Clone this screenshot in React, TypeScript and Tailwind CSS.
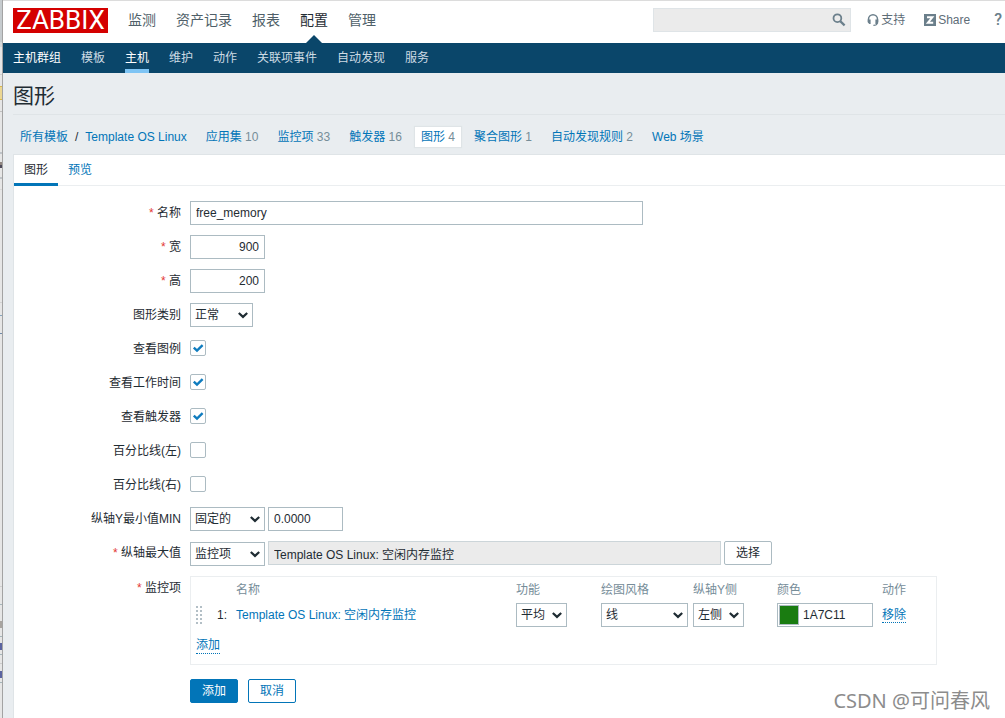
import React from "react";

const mainMenu = ["监测", "资产记录", "报表", "配置", "管理"];
const subMenu = ["主机群组", "模板", "主机", "维护", "动作", "关联项事件", "自动发现", "服务"];
const templateLinks: { label: string; count?: number; active?: boolean }[] = [
  { label: "应用集", count: 10 },
  { label: "监控项", count: 33 },
  { label: "触发器", count: 16 },
  { label: "图形", count: 4, active: true },
  { label: "聚合图形", count: 1 },
  { label: "自动发现规则", count: 2 },
  { label: "Web 场景" },
];

const fieldBox = "block h-6 border border-[#acbbc2] bg-white text-xs text-[#1f2c33] outline-none focus:border-[#0275b8]";

function Chevron() {
  return (
    <svg className="pointer-events-none absolute right-[5px] top-[7px] h-[10px] w-[10px]" viewBox="0 0 10 10" aria-hidden="true">
      <path d="M0.8 3 L5 6.9 L9.2 3" fill="none" stroke="#1f2c33" strokeWidth="2.2" />
    </svg>
  );
}

function Select({ id, value, width, label }: { id: string; value: string; width: string; label?: string }) {
  return (
    <span className={`relative block ${width}`}>
      <select id={id} aria-label={label} defaultValue={value} className={`${fieldBox} w-full appearance-none pr-4 pl-1`}>
        <option>{value}</option>
      </select>
      <Chevron />
    </span>
  );
}

function Row({ id, label, required, children }: { id: string; label: string; required?: boolean; children: React.ReactNode }) {
  return (
    <div className="grid grid-cols-[167px_minmax(0,1fr)] gap-x-[9px]">
      <label htmlFor={id} className="text-right leading-6">
        {required && <span className="text-[#e33734]">* </span>}
        {label}
      </label>
      <div>{children}</div>
    </div>
  );
}

function CheckRow({ id, label, checked }: { id: string; label: string; checked?: boolean }) {
  return (
    <Row id={id} label={label}>
      <div className="h-6 pt-[3px]">
        <span className="relative block h-4 w-4">
          <input
            id={id}
            type="checkbox"
            defaultChecked={checked}
            className="peer block h-4 w-4 appearance-none rounded-xs border border-[#acbbc2] bg-white"
          />
          <svg className="pointer-events-none absolute inset-0 hidden h-4 w-4 peer-checked:block" viewBox="0 0 16 16" aria-hidden="true">
            <path d="M3.8 7.6 L7 10.6 L12.6 5.2" fill="none" stroke="#0f7cbf" strokeWidth="2.4" />
          </svg>
        </span>
      </div>
    </Row>
  );
}

function WindowEdge() {
  const marks: [number, number, string][] = [
    [0, 42, "#c6cbce"],
    [42, 5, "#d6d9da"],
    [74, 1, "#d0d0d0"],
    [86, 14, "#d9b84f"],
    [87, 12, "#ecd793"],
    [111, 1, "#c0c0c0"],
    [152, 2, "#bfc4c8"],
    [162, 3, "#8f8580"],
    [165, 3, "#4e4a5a"],
    [177, 2, "#bfc4c8"],
    [189, 1, "#d8d8d8"],
    [302, 1, "#d2d2d2"],
    [315, 1, "#86a5bd"],
    [333, 1, "#6f8aa8"],
    [586, 1, "#d0d0d0"],
    [604, 1, "#a5b5ba"],
    [621, 7, "#a8a4a0"],
    [636, 1, "#a5b5ba"],
    [643, 7, "#5a63a0"],
    [654, 1, "#a5b5ba"],
    [663, 1, "#cccccc"],
    [671, 7, "#5a63a0"],
    [682, 1, "#a5b5ba"],
  ];
  return (
    <aside className="w-[3px] shrink-0 border-r border-[#a3a3a3] bg-[#e6e6e6]" aria-hidden="true">
      <svg width="2" height="718" className="block" shapeRendering="crispEdges">
        {marks.map(([y, h, c]) => (
          <rect key={y} x="0" y={y} width="2" height={h} fill={c} />
        ))}
      </svg>
    </aside>
  );
}

function Header() {
  return (
    <header>
      <div className="flex h-[43px] items-start border-t border-[#dcdcdc] bg-white pl-[10px] pr-[3px] pt-[7px]">
        <a href="#" className="flex h-[25px] w-[95px] shrink-0 items-center justify-center bg-[#d40000] font-['Roboto','Liberation_Sans',sans-serif] text-[26px] leading-[25px] text-white">
          ZABBIX
        </a>
        <nav className="ml-5 flex gap-5 text-sm leading-6 whitespace-nowrap">
          {mainMenu.map((item) => (
            <a key={item} href="#" className={item === "配置" ? "relative h-[35px] text-[#1f2c33]" : "text-[#4f5f69]"}>
              {item}
              {item === "配置" && (
                <svg className="absolute bottom-0 left-[6px] h-2 w-4" viewBox="0 0 16 8" aria-hidden="true">
                  <path d="M0 8 L8 0 L16 8 Z" fill="#0a466a" />
                </svg>
              )}
            </a>
          ))}
        </nav>
        <form className="relative ml-auto w-[198px]" role="search">
          <input aria-label="搜索" className="block h-6 w-full border border-[#dfe4e7] bg-[#ebebeb] px-1 pr-7 outline-none" />
          <button type="button" aria-label="搜索" className="absolute right-[5px] top-[5px]">
            <svg className="block h-[14px] w-[14px]" viewBox="0 0 14 14" aria-hidden="true">
              <circle cx="5.4" cy="5.2" r="3.9" fill="none" stroke="#6b7f8b" strokeWidth="1.8" />
              <path d="M8.2 8.1 L12.6 12.4" stroke="#6b7f8b" strokeWidth="2.2" />
            </svg>
          </button>
        </form>
        <div className="ml-4 flex items-center leading-6 whitespace-nowrap text-[#5e6d77]">
          <a href="#" className="flex items-center gap-[2px]">
            <svg className="h-3 w-3" viewBox="0 0 12 12" aria-hidden="true">
              <path d="M1.5 8V5.3a4.5 4.5 0 0 1 9 0V8" fill="none" stroke="#6b7f8b" strokeWidth="1.5" />
              <path d="M.8 5.6h2.8v4.4H2.3L.8 8.6zM8.4 5.6h2.8v3.6L9.8 10H8.4z" fill="#6b7f8b" />
              <path d="M10.4 9 C10 11 8.6 11.4 6.4 11.4" fill="none" stroke="#6b7f8b" strokeWidth="1.2" />
            </svg>
            支持
          </a>
          <a href="#" className="ml-[19px] flex items-center gap-[2px]">
            <svg className="h-3 w-3" viewBox="0 0 12 12" aria-hidden="true">
              <rect width="12" height="12" fill="#6b7f8b" />
              <path d="M3 3.2 H8.4 L3.8 8.8 H9.2" fill="none" stroke="#fff" strokeWidth="1.9" />
            </svg>
            Share
          </a>
          <a href="#" aria-label="帮助" className="ml-6 font-['Roboto','Liberation_Sans',sans-serif] text-base leading-6 font-medium text-[#6b7f8b]">?</a>
        </div>
      </div>
      <nav className="flex h-[30px] gap-5 bg-[#0a466a] pl-[10px] leading-[30px] whitespace-nowrap text-[#cddbe4]">
        {subMenu.map((item, i) => (
          <a
            key={item}
            href="#"
            className={item === "主机" ? "border-b-4 border-[#7ec4f4] text-white" : i === 0 ? "text-white" : ""}
          >
            {item}
          </a>
        ))}
      </nav>
    </header>
  );
}

function ItemsTable() {
  return (
    <div className="max-w-[747px] border border-[#ebeef0]">
      <table className="w-full table-fixed text-left">
        <colgroup>
          <col className="w-[21px]" />
          <col className="w-6" />
          <col />
          <col className="w-[85px]" />
          <col className="w-[92px]" />
          <col className="w-[84px]" />
          <col className="w-[105px]" />
          <col className="w-[54px]" />
        </colgroup>
        <thead className="text-[#768d99]">
          <tr className="h-[26px]">
            <th />
            <th />
            <th className="font-normal">名称</th>
            <th className="font-normal">功能</th>
            <th className="font-normal">绘图风格</th>
            <th className="font-normal">纵轴Y侧</th>
            <th className="font-normal">颜色</th>
            <th className="font-normal">动作</th>
          </tr>
        </thead>
        <tbody>
          <tr className="h-6">
            <td className="pl-[5px]">
              <svg className="block h-[18px] w-[6px]" viewBox="0 0 6 18" shapeRendering="crispEdges" aria-hidden="true">
                {[0, 4, 8, 12, 16].map((y) => (
                  <path key={y} d={`M0 ${y}h2v2h-2zM4 ${y}h2v2h-2z`} fill="#b3bfc6" />
                ))}
              </svg>
            </td>
            <td className="pl-[5px]">1:</td>
            <td>
              <a href="#" className="text-[#0275b8]">Template OS Linux: 空闲内存监控</a>
            </td>
            <td><Select id="calc" label="功能" value="平均" width="w-[51px]" /></td>
            <td><Select id="draw" label="绘图风格" value="线" width="w-[87px]" /></td>
            <td><Select id="yside" label="纵轴Y侧" value="左侧" width="w-[51px]" /></td>
            <td>
              <div className="flex h-6 w-24 border border-[#acbbc2] p-px">
                <button type="button" aria-label="选择颜色" className="h-5 w-5 shrink-0 border border-[#acbbc2] bg-[#1a7c11]" />
                <input aria-label="颜色" defaultValue="1A7C11" className="w-full min-w-0 pl-1 outline-none" />
              </div>
            </td>
            <td>
              <a href="#" className="border-b border-dotted border-[#0275b8] text-[#0275b8]">移除</a>
            </td>
          </tr>
          <tr className="h-[37px]">
            <td colSpan={8} className="pl-[5px]">
              <button type="button" className="border-b border-dotted border-[#0275b8] leading-[15px] text-[#0275b8]">添加</button>
            </td>
          </tr>
        </tbody>
      </table>
    </div>
  );
}

export default function App() {
  return (
    <div className="relative flex min-h-screen overflow-hidden bg-[#e9edf0] font-['Liberation_Sans','Noto_Sans_CJK_SC',sans-serif] text-xs text-[#1f2c33]">
      <WindowEdge />
      <div className="flex min-w-0 flex-1 flex-col">
        <Header />
        <main className="flex flex-1 flex-col pl-[10px]">
          <h1 className="h-[42px] border-b border-[#dfe4e7] text-[21px] leading-[46px]">图形</h1>
          <nav className="flex h-[39px] items-center gap-[7px] pt-1 pl-px whitespace-nowrap">
            <div className="flex px-[6px] text-[#0275b8]">
              <a href="#">所有模板</a>
              <span className="px-[7px] text-[#1f2c33]">/</span>
              <a href="#">Template OS Linux</a>
            </div>
            {templateLinks.map((l) => (
              <a
                key={l.label}
                href="#"
                className={l.active ? "bg-white px-[6px] leading-5 text-[#0275b8] shadow-[0_0_1px_1px_#dfe4e7]" : "px-[6px] leading-5 text-[#0275b8]"}
              >
                {l.label}
                {l.count !== undefined && <span className="text-[#768d99]"> {l.count}</span>}
              </a>
            ))}
          </nav>
          <div className="flex-1 border-l border-t border-[#dfe4e7] bg-white">
            <div className="flex h-[31px] border-b border-[#ebeef0]" role="tablist">
              <button type="button" role="tab" aria-selected="true" className="h-[31px] border-b-3 border-[#0275b8] px-[10px] pt-[2px]">图形</button>
              <button type="button" role="tab" aria-selected="false" className="h-[31px] border-b-3 border-transparent px-[10px] pt-[2px] text-[#0275b8]">预览</button>
            </div>
            <form className="flex flex-col gap-[10px] pt-[15px] pb-4">
              <Row id="name" label="名称" required>
                <input id="name" defaultValue="free_memory" className={`${fieldBox} w-full max-w-[453px] px-[5px]`} />
              </Row>
              <Row id="width" label="宽" required>
                <input id="width" defaultValue="900" className={`${fieldBox} w-[75px] px-[5px] text-right`} />
              </Row>
              <Row id="height" label="高" required>
                <input id="height" defaultValue="200" className={`${fieldBox} w-[75px] px-[5px] text-right`} />
              </Row>
              <Row id="graphtype" label="图形类别">
                <Select id="graphtype" value="正常" width="w-[63px]" />
              </Row>
              <CheckRow id="legend" label="查看图例" checked />
              <CheckRow id="worktime" label="查看工作时间" checked />
              <CheckRow id="triggers" label="查看触发器" checked />
              <CheckRow id="percentleft" label="百分比线(左)" />
              <CheckRow id="percentright" label="百分比线(右)" />
              <Row id="ymin" label="纵轴Y最小值MIN">
                <div className="flex gap-[3px]">
                  <Select id="ymin" value="固定的" width="w-[75px]" />
                  <input aria-label="最小值" defaultValue="0.0000" className={`${fieldBox} w-[75px] px-[5px]`} />
                </div>
              </Row>
              <Row id="ymax" label="纵轴最大值" required>
                <div className="flex h-[25px] gap-[3px]">
                  <div className="flex items-end">
                    <Select id="ymax" value="监控项" width="w-[75px]" />
                  </div>
                  <input
                    aria-label="最大值监控项"
                    readOnly
                    defaultValue="Template OS Linux: 空闲内存监控"
                    className="h-6 w-full max-w-[453px] border border-[#ccd5d9] bg-[#ebebeb] px-[5px] outline-none"
                  />
                  <button type="button" className="h-6 w-12 shrink-0 rounded-xs border border-[#acbbc2]">选择</button>
                </div>
              </Row>
              <div className="grid grid-cols-[167px_minmax(0,1fr)] gap-x-[9px]">
                <div className="text-right leading-6">
                  <span className="text-[#e33734]">* </span>监控项
                </div>
                <ItemsTable />
              </div>
              <div className="flex gap-[10px] pl-44 pt-1">
                <button type="submit" className="h-6 w-12 rounded-xs border border-[#0275b8] bg-[#0275b8] text-white">添加</button>
                <button type="button" className="h-6 w-12 rounded-xs border border-[#0275b8] text-[#0275b8]">取消</button>
              </div>
            </form>
          </div>
        </main>
      </div>
      <div className="absolute bottom-1 right-[15px] font-['Noto_Sans','Noto_Sans_CJK_SC',sans-serif] text-xl leading-7 text-[#8c8c8c] [text-shadow:1px_1px_1px_#ffffff]">
        CSDN @可问春风
      </div>
    </div>
  );
}
